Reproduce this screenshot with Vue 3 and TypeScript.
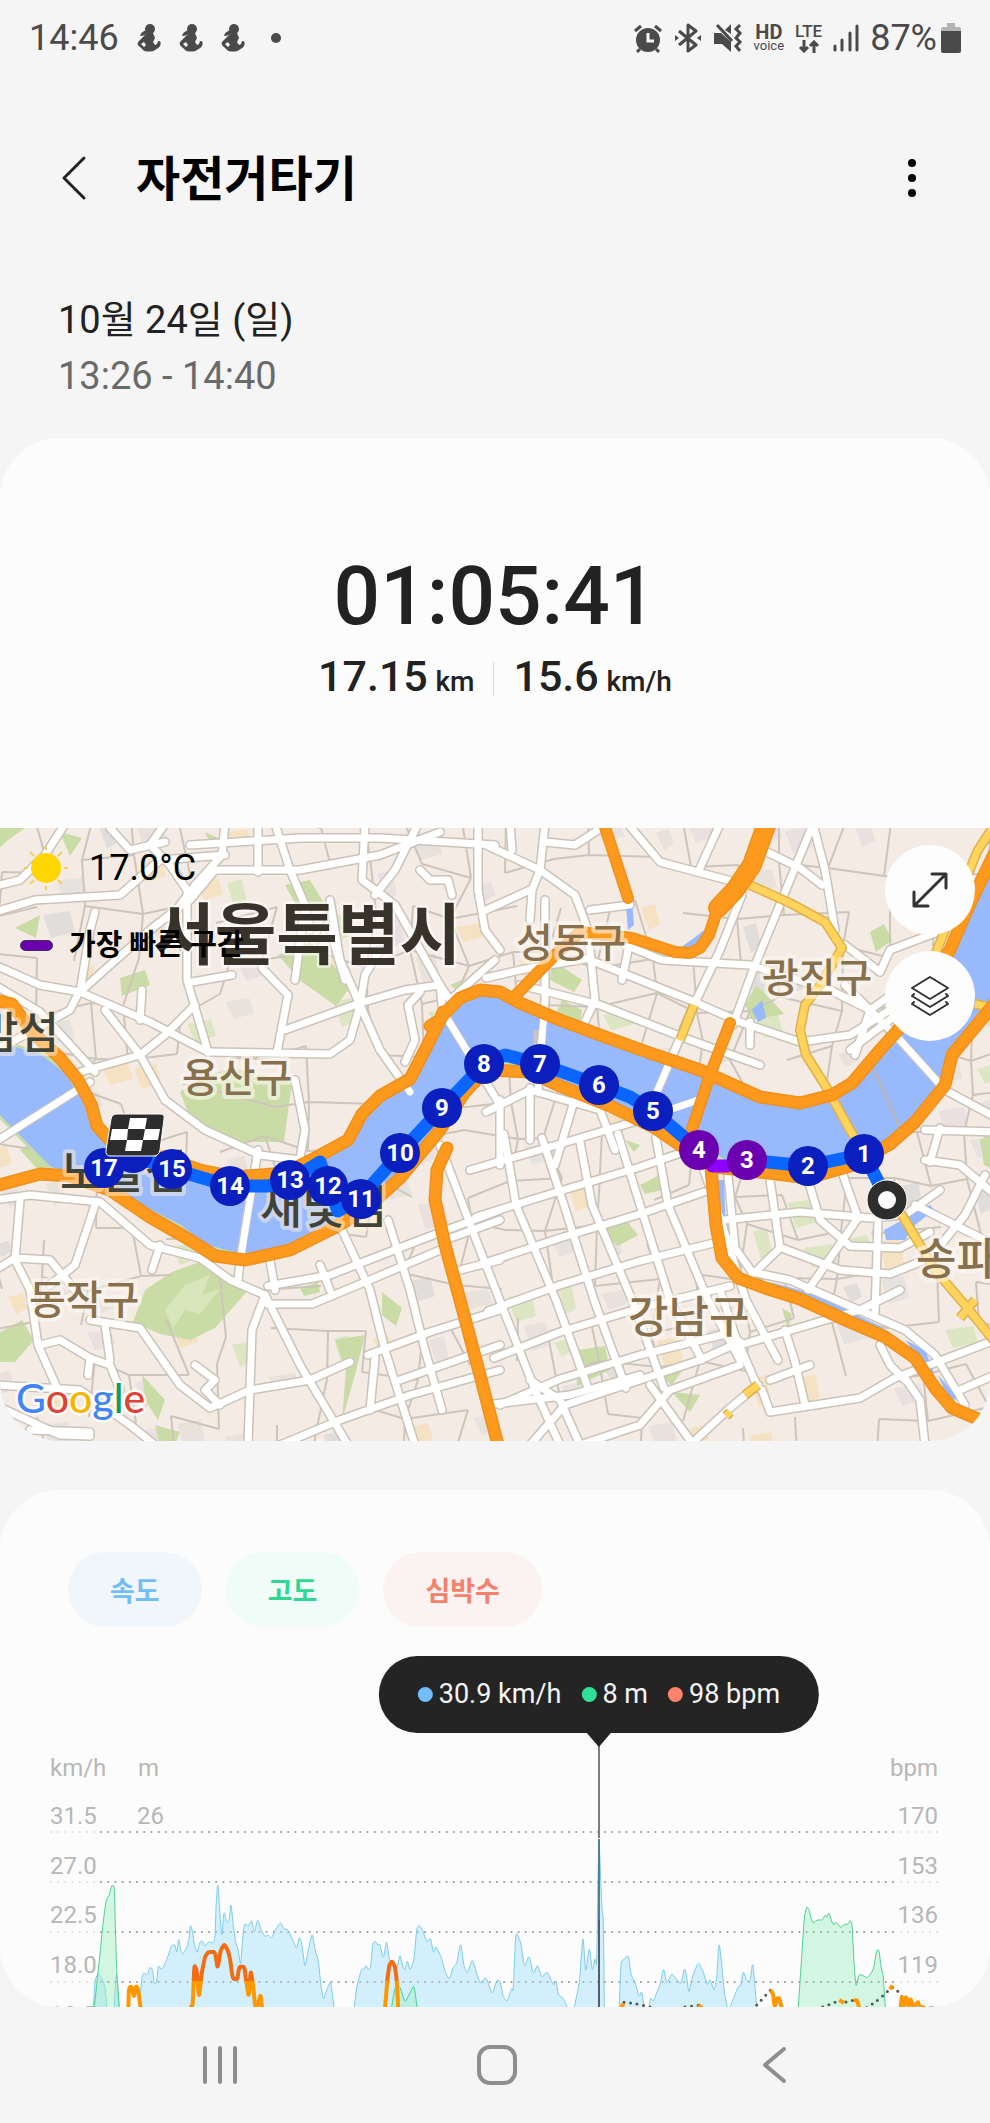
<script setup lang="ts">
type Point = [number, number]

interface Marker { n: number; x: number; y: number; fast?: boolean }
interface Label { text: string; x: number; y: number; size: number; kind: string }

const chips = [
  { text: '속도', kind: 'speed' },
  { text: '고도', kind: 'height' },
  { text: '심박수', kind: 'pulse' },
]

const readings = [
  { text: '30.9 km/h', kind: 'speed' },
  { text: '8 m', kind: 'height' },
  { text: '98 bpm', kind: 'pulse' },
]

/* ---------- map ---------- */

const markers: Marker[] = [
  { n: 16, x: 133, y: 1153 },
  { n: 17, x: 104, y: 1168 },
  { n: 15, x: 172, y: 1169 },
  { n: 14, x: 230, y: 1186 },
  { n: 13, x: 290, y: 1180 },
  { n: 12, x: 328, y: 1186 },
  { n: 11, x: 361, y: 1199 },
  { n: 10, x: 400, y: 1153 },
  { n: 9, x: 442, y: 1108 },
  { n: 8, x: 484, y: 1064 },
  { n: 7, x: 540, y: 1064 },
  { n: 6, x: 599, y: 1085 },
  { n: 5, x: 653, y: 1111 },
  { n: 3, x: 747, y: 1160, fast: true },
  { n: 4, x: 699, y: 1150, fast: true },
  { n: 2, x: 808, y: 1166 },
  { n: 1, x: 864, y: 1154 },
]

const labels: Label[] = [
  { text: '서울특별시', x: 153, y: 959, size: 67, kind: 'city' },
  { text: '성동구', x: 516, y: 957, size: 40, kind: 'district' },
  { text: '광진구', x: 762, y: 992, size: 40, kind: 'district' },
  { text: '용산구', x: 182, y: 1092, size: 40, kind: 'district' },
  { text: '동작구', x: 29, y: 1314, size: 40, kind: 'district' },
  { text: '강남구', x: 628, y: 1333, size: 44, kind: 'district' },
  { text: '송파구', x: 916, y: 1275, size: 44, kind: 'district' },
  { text: '밤섬', x: -22, y: 1049, size: 44, kind: 'island' },
  { text: '노들섬', x: 60, y: 1188, size: 46, kind: 'island' },
  { text: '새빛섬', x: 260, y: 1223, size: 46, kind: 'island' },
]

const streets: string[] = [
  '65,824 45,855 20,880 -5,886', '-5,912 35,900 120,895 160,860 225,855', '165,824 150,845 170,865 187,890 187,980 208,1052',
  '225,824 222,855 195,885 180,905', '190,845 300,838 380,838 495,845', '258,824 258,872', '190,900 215,870 300,870 380,855 440,832',
  '275,824 290,870 305,905 310,930', '365,824 362,880 395,905 440,985', '452,895 448,880 430,880 420,870', '478,824 478,890 485,930 500,950',
  '418,824 395,870 375,895', '192,982 232,975', '208,1052 330,1054 350,1040 360,1005 365,975 380,950', '262,968 288,995 277,1052',
  '330,900 340,960 360,1005 380,1050 410,1092', '440,1145 480,1250 535,1390 560,1445', '-5,965 40,985 80,992 150,1022 208,1052',
  '80,992 110,965 150,930 182,905', '95,912 90,930 80,992', '105,1010 140,1055 165,1100', '80,1072 140,1055 165,1035 195,1005',
  '-5,1142 90,1082', '-5,1050 25,1035 70,1010 80,990', '165,1100 205,1130 260,1155 300,1160', '295,1080 305,1130 300,1158', '-5,985 40,1012 95,1072',
  '285,1030 360,1003', '360,1003 405,990 440,985 450,1000 495,960', '440,985 442,1005', '445,1015 500,1105', '405,1062 415,1040 408,1005 420,992',
  '345,980 330,930', '305,905 295,980', '110,828 130,850 165,842', '142,990 140,1020',
  '258,1150 240,1262 238,1280', '-5,1200 30,1195 100,1202 150,1245 200,1258 230,1280 265,1295', '268,1286 330,1275 420,1240 500,1210',
  '20,1200 15,1260 30,1290 38,1345 58,1390', '-5,1270 15,1258 50,1260 75,1290', '95,1205 75,1265 50,1285', '90,1320 140,1328 180,1385 210,1408 250,1390 310,1380 350,1362',
  '265,1295 252,1330 248,1445', '265,1295 300,1365 348,1445', '268,1304 312,1304 370,1280 440,1250', '342,1230 370,1290 385,1350 415,1445',
  '388,1220 410,1290 425,1350 442,1410', '270,1260 275,1290', '368,1355 430,1332 500,1310', '375,1358 370,1410', '280,1445 340,1420 410,1395 500,1370',
  '400,1380 500,1345', '40,1345 60,1340 90,1358 110,1365 120,1390', '90,1358 88,1375', '-5,1385 80,1390 130,1425 155,1445', '-5,1405 60,1435 90,1436', '30,1430 90,1432',
  '160,1245 152,1270', '195,1365 215,1380 205,1390 220,1405', '320,1265 330,1290', '105,1325 110,1360', '460,1270 500,1260', '445,1240 500,1220',
  '486,845 540,870 575,895 588,930 595,1000 585,1022', '545,824 540,870 532,890 530,920', '486,910 530,890', '510,824 512,850', '545,842 575,845 598,830',
  '628,824 660,862 735,882', '720,824 700,868', '813,824 783,897 753,970 733,1025', '742,895 720,950 693,1007 657,1092', '813,824 825,870 835,930',
  '767,852 800,868 822,885', '590,960 690,1000 740,1022 800,1042 850,1035 890,1010', '520,985 600,1005 690,1040 760,1065', '486,978 520,970 590,958', '628,950 622,980',
  '625,945 662,960 750,965 830,990 870,1010', '845,945 880,972 890,950 935,933', '855,1055 870,1010 905,985', '850,1050 900,1012', '845,985 900,1040 945,1090 995,1117',
  '545,900 545,1000 538,1090', '750,1022 750,1045', '590,910 630,905', '486,1112 530,1090 600,1110 615,1150', '500,1100 500,1165', '575,1098 555,1165', '530,1088 530,1140',
  '925,1130 995,1132', '925,1160 960,1165 995,1195', '940,1128 930,1162', '724,1220 800,1212 870,1218 905,1215 940,1190', '770,1180 780,1248 752,1275', '808,1180 820,1220 850,1246 900,1248 930,1232',
  '843,1175 858,1218 808,1290', '782,1248 840,1270 890,1274 930,1258 965,1215 985,1175', '728,1175 735,1248 752,1272 790,1280 905,1330 935,1355 965,1405', '878,1222 875,1312', '915,1205 995,1245',
  '740,1345 860,1310 900,1290', '785,1330 795,1362 805,1405', '762,1390 770,1412 860,1398 895,1378 995,1340', '905,1378 920,1400 925,1445', '720,1290 735,1335 758,1388', '690,1445 730,1408 758,1385',
  '530,1445 565,1405 640,1380 700,1360 740,1342', '580,1445 640,1425 670,1390 740,1365', '880,1345 890,1365 905,1380', '960,1390 995,1375',
  '486,1405 570,1395 640,1375', '580,1445 560,1400 530,1380', '650,1385 690,1440', '770,1380 810,1365',
]

/* Regular street grid south of the river */
const grid: string[] = []
for (let i = 0; i < 6; i++) {
  const y = 1144 + i * 47
  grid.push(`${470 + i * 6},${y + 26} 560,${y} 640,${y - 24} ${i > 2 ? 730 : 704},${y - 46}`)
}
for (let i = 0; i < 6; i++) {
  const x = 504 + i * 38
  grid.push(`${x},${1134 + (i % 3) * 4} ${x + 12 + (i % 2) * 10},1205 ${x + 52},1300 ${x + 84},${i > 2 ? 1360 : 1388}`)
}

/* Fine lanes: a jittered mesh with a fixed seed */
let seed = 11
function rand(): number {
  seed = (seed * 16807) % 2147483647
  return seed / 2147483647
}
const COLS = 23
const ROWS = 15
const mesh: Point[][] = Array.from({ length: ROWS }, (_, r) =>
  Array.from({ length: COLS }, (_, c): Point => [
    Math.round(c * 47 - 10 + (rand() - 0.5) * 26),
    Math.round(820 + r * 46 + (rand() - 0.5) * 24),
  ]),
)
const lanes: string[] = []
const blocks: { d: string; fill: string }[] = []
const tints = ['#e9e1dc', '#f5e2c2', '#e0dddb', '#eae0e0', '#dde6c2', '#e6e2df']
for (let r = 0; r < ROWS - 1; r++) {
  for (let c = 0; c < COLS - 1; c++) {
    const [x, y] = mesh[r][c]
    if (rand() < 0.5) lanes.push(`M${x} ${y}L${mesh[r][c + 1].join(' ')}`)
    if (rand() < 0.5) lanes.push(`M${x} ${y}L${mesh[r + 1][c].join(' ')}`)
    if (rand() < 0.5) {
      const w = 12 + Math.round(rand() * 16)
      const h = 10 + Math.round(rand() * 16)
      blocks.push({
        d: `M${x + 6} ${y + 8}l${w} ${-4}l5 ${h}l${-w + 3} 6z`,
        fill: tints[Math.floor(rand() * tints.length)],
      })
    }
  }
}
const lanePath = lanes.join('')

const parks: string[] = [
  '180,1092 200,1078 232,1068 292,1082 284,1142 240,1142 192,1122', '278,955 310,942 352,985 336,1006 302,982', '285,885 310,880 325,905 300,912',
  '120,978 145,970 150,985 122,996', '15,928 40,915 36,938', '-5,828 25,828 8,840 -5,852', '60,832 82,838 70,856', '205,832 218,838 212,848',
  '133,1322 145,1290 172,1272 205,1260 250,1288 215,1328 190,1340 160,1334', '-5,1335 22,1320 34,1340 15,1362 -5,1362', '142,1375 165,1400 158,1420 145,1400',
  '155,1425 180,1432 175,1445 160,1445', '382,1292 402,1308 396,1326 382,1315', '335,1340 365,1335 355,1375 342,1420 346,1370', '594,1225 622,1215 638,1235 618,1246',
  '578,1350 605,1346 610,1370 577,1386', '552,960 582,980 574,992 550,980', '562,1000 582,1010 580,1022 556,1014', '870,932 884,924 892,940 876,952',
  '745,1005 756,985 768,996 784,1014 752,1020', '715,1082 780,1108 718,1098', '490,994 520,1002 512,1008 490,1004', '655,1372 690,1360 672,1385', '672,1392 700,1395 690,1412',
  '980,1140 995,1130 995,1170 984,1165', '300,1288 318,1282 320,1292 304,1296', '625,1140 640,1145 634,1152', '35,1140 60,1172 40,1172 20,1150', '782,1308 792,1314 788,1330',
  '640,1185 660,1175 662,1190 645,1194', '245,1250 300,1240 280,1250', '450,985 462,980 460,992',
]

const river =
  'M-5 1040L40 1052L66 1072L84 1100L92 1125L112 1142L160 1156L210 1176L275 1176L318 1158L352 1134L362 1112L385 1094L412 1076L428 1045L444 1012L470 992L500 992L560 1018L650 1052L720 1078L780 1102L830 1098L860 1076L895 1032L928 985L955 945L970 900L995 850V1005L956 1052L946 1084L905 1130L850 1164L800 1172L740 1168L704 1150L660 1124L610 1102L560 1082L520 1064L486 1064L462 1098L430 1140L396 1178L350 1220L300 1244L245 1256L205 1246L180 1226L140 1206L110 1188L50 1168L-5 1112Z'

const waters: string[] = [
  '626,905 632,900 634,925 628,930', '680,948 698,935 704,930 702,945 690,955', '752,1010 762,1000 766,1018 758,1022', '884,1230 930,1205 934,1210 915,1225 905,1240 886,1240',
  '718,1180 724,1180 726,1235 735,1265 726,1262', '770,1282 800,1290 830,1302 880,1326 900,1340 890,1344 820,1312', '905,1340 925,1350 935,1375 925,1365', '938,1375 958,1398 950,1402',
]

const highways: { pts: string; w: number }[] = [
  { pts: '-5,1000 12,1004 33,1033 60,1058 78,1080 91,1104 97,1126 112,1142 150,1152 200,1170 235,1177 285,1173 315,1158 348,1140 362,1114 380,1096 410,1079 425,1050 442,1016 460,998 480,990 500,992 520,1003 560,1020 600,1035 650,1053 700,1070 760,1097 800,1103 832,1095 852,1083 880,1050 898,1030 928,985 950,950 968,908 995,852', w: 12 },
  { pts: '-5,1186 40,1174 70,1176 110,1190 150,1217 190,1240 215,1256 245,1260 290,1250 330,1230 365,1210 400,1178 440,1130 465,1092 486,1070 530,1072 560,1086 610,1106 655,1128 690,1152 715,1167 760,1172 808,1178 850,1166 890,1144 915,1122 945,1085 952,1055 995,1003', w: 12 },
  { pts: '447,1148 437,1170 435,1200 445,1245 460,1300 480,1375 498,1445', w: 12 },
  { pts: '711,1168 716,1225 722,1258 738,1278 765,1288 800,1299 850,1322 885,1337 915,1358 935,1388 952,1408 980,1420', w: 12 },
  { pts: '730,1023 710,1075 690,1135', w: 11 },
  { pts: '604,824 628,898', w: 11 },
  { pts: '768,820 752,865 735,890 718,908 709,935 700,948 690,953 675,952 632,938 580,932 555,955 515,996', w: 11 },
  { pts: '768,820 752,865 735,890 718,908', w: 19 },
  { pts: '443,1012 440,1020 430,1026', w: 12 },
]

const arterials: string[] = [
  '750,885 790,903 825,922 842,948 820,985 805,1005 800,1030 806,1055 825,1085 850,1130 880,1180 905,1220 935,1270 965,1305 995,1342',
  '995,824 978,850 955,905 935,955', '694,1005 680,1040', '758,1385 745,1395', '730,1412 726,1416', '975,1004 995,1008', '960,1318 975,1300',
]

/* ---------- chart ---------- */

/* Samples are stored as triple-density coordinates: three units per drawn pixel */
const DENSITY = 3
const BASE = 801

function parse(raw: string, shift = 0): Point[] {
  return raw.split(' ').map((p): Point => {
    const [x, y] = p.split(',').map(Number)
    return [(x + shift) / DENSITY, y / DENSITY]
  })
}
function smooth(pts: Point[]): string {
  let d = `M${pts[0][0].toFixed(1)} ${pts[0][1].toFixed(1)}`
  for (let i = 1; i < pts.length - 1; i++) {
    const [x, y] = pts[i]
    const [px, py] = pts[i - 1]
    const [nx, ny] = pts[i + 1]
    d += `L${(x + (px - x) * 0.25).toFixed(1)} ${(y + (py - y) * 0.25).toFixed(1)}`
    d += `Q${x.toFixed(1)} ${y.toFixed(1)} ${(x + (nx - x) * 0.25).toFixed(1)} ${(y + (ny - y) * 0.25).toFixed(1)}`
  }
  const last = pts[pts.length - 1]
  return `${d}L${last[0].toFixed(1)} ${last[1].toFixed(1)}`
}

const R = 1470
const speed: string[] = [
  smooth(parse(`280,${BASE} 285,720 295,698 305,712 315,740 320,${BASE}`)),
  smooth(parse(`343,${BASE} 349,690 356,${BASE}`)),
  smooth(parse('418,801 425,715 430,698 442,705 450,680 458,690 463,735 470,725 475,675 485,690 500,660 515,615 525,615 531,640 536,592 545,645 560,625 567,600 571,553 578,575 583,615 592,640 600,605 607,602 615,620 625,605 640,610 645,590 648,500 653,425 660,520 665,595 672,512 680,548 687,545 693,487 700,560 708,610 715,630 722,680 730,570 735,550 745,560 755,540 763,580 773,536 783,570 795,590 805,585 815,595 825,570 842,546 850,565 865,570 878,600 890,628 898,590 905,610 915,684 925,630 937,578 945,630 955,660 962,730 970,782 980,750 992,722 1002,801')),
  smooth(parse('1063,801 1070,740 1085,685 1092,690 1098,675 1105,690 1112,680 1118,610 1125,603 1132,615 1140,612 1150,658 1160,600 1168,660 1180,672 1190,690 1200,642 1208,680 1215,690 1222,660 1230,692 1242,660 1250,565 1258,555 1268,570 1280,607 1292,593 1300,640 1308,618 1325,655 1335,695 1348,720 1360,680 1370,672 1382,605 1392,680 1402,702 1417,656 1430,700 1440,732 1458,710 1470,745 1478,762 1490,720 1500,722 1510,772 1522,785 1535,743 1540,755 1547,574 1562,605 1573,684 1587,645 1600,704 1613,673 1625,714 1642,693 1660,737 1668,720 1675,765 1690,775 1702,801')),
  smooth(parse('253,801 268,730 273,660 279,585 287,702 298,618 307,696 315,653 320,682 324,400 327,285 332,420 336,510 340,530 343,801', R)),
  smooth(parse('388,801 393,665 405,655 415,645 423,705 435,725 447,772 455,752 462,801', R)),
  smooth(parse('478,801 482,773 490,785 503,750 510,735 521,682 530,732 545,701 555,712 572,734 585,679 597,763 607,710 625,666 640,695 652,737 660,716 672,754 680,720 687,604 695,670 703,760 712,801', R)),
  smooth(parse('720,801 745,738 752,738 760,692 770,722 780,725 788,666 795,740 800,801', R)),
]
const height: string[] = [
  smooth(parse('283,801 300,640 308,560 318,480 328,465 335,435 343,440 346,560 350,690 358,801')),
  smooth(parse('1175,801 1183,750 1190,733 1200,740 1215,788 1228,762 1242,735 1251,801')),
  smooth(parse('925,801 935,650 943,530 950,500 957,508 963,535 970,550 980,540 998,540 1005,525 1010,532 1017,518 1028,554 1040,547 1052,564 1062,553 1075,552 1080,541 1086,548 1092,670 1098,742 1107,703 1120,707 1133,714 1150,690 1160,630 1167,630 1173,680 1180,710 1186,801', R)),
]
const pulse: string[] = [
  smooth(parse('385,806 387,742 395,740 402,772 408,738 414,745 422,806')),
  smooth(parse('568,801 578,800 583,676 590,690 597,775 605,700 615,650 625,636 645,636 653,686 662,630 673,613 683,630 690,655 698,716 712,718 718,680 733,680 738,720 746,772 752,690 760,740 765,800 772,800 782,762 786,806')),
  smooth(parse('1155,806 1162,720 1168,675 1176,664 1185,680 1190,720 1195,806')),
  smooth(parse('394,806 400,790', R)),
  smooth(parse('625,796 636,803', R)),
  smooth(parse('842,750 850,765 854,801 862,775 868,775 876,806', R)),
  smooth(parse('1048,780 1062,788', R)),
  smooth(parse('1092,781 1102,781 1108,806', R)),
  smooth(parse('1200,748 1208,736', R)),
  smooth(parse('1232,806 1235,768 1243,800 1248,768 1256,800 1262,775 1270,803 1284,785 1288,800 1305,803', R)),
]
const gaps: string[] = [
  smooth(parse('402,787 430,790 490,803', R)),
  smooth(parse('585,801 628,796', R)),
  smooth(parse('800,795 842,750', R)),
  smooth(parse('998,801 1045,783', R)),
  smooth(parse('1068,786 1100,778', R)),
  smooth(parse('1130,803 1165,780 1210,737 1240,775', R)),
]

const rows = [
  { y: 84, left: '31.5', mid: '26', right: '170' },
  { y: 134, left: '27.0', mid: '', right: '153' },
  { y: 183, left: '22.5', mid: '', right: '136' },
  { y: 233, left: '18.0', mid: '', right: '119' },
  { y: 283, left: '13.5', mid: '', right: '102' },
]
const rules = [92, 142, 192, 242]
</script>

<template>
  <div class="page">
    <div class="status">
      <div class="status-side">
        <span>14:46</span>
        <svg v-for="i in 3" :key="i" class="figure" viewBox="0 0 24 28" width="24" height="28">
          <circle cx="13" cy="5" r="5" />
          <path d="M10 6C7 7 4 8 3 12c3 0 6-1 8-4z" />
          <path d="M10 9h6l2 5-2 4 2 3 2-1c1-1 0-3 2-3 2 0 2 3 1 5-2 3-4 3-5 4-2 2-10 2-12 0-1-2-4-3-5-5-1-2 0-3 1-4zM7 18l-3 2 3 3 2-2z" fill-rule="evenodd" />
        </svg>
        <span class="bullet"></span>
      </div>
      <div class="status-side right">
        <svg viewBox="0 0 30 30" width="30" height="30">
          <circle cx="15" cy="17" r="12" fill="#4a4a4a" />
          <path d="M2 8l6-5M28 8l-6-5M7 26l-3 3M23 26l3 3" stroke="#4a4a4a" stroke-width="3" fill="none" />
          <path d="M15 10v8h6" stroke="#f5f5f5" stroke-width="3" fill="none" />
        </svg>
        <svg viewBox="0 0 28 30" width="28" height="30" fill="none" stroke="#4a4a4a" stroke-width="3" stroke-linejoin="round">
          <path d="M5 8l17 14-8 6V2l8 6L5 22" />
          <path d="M1 12l4 3-4 3zM27 12l-4 3 4 3z" fill="#4a4a4a" stroke="none" />
        </svg>
        <svg viewBox="0 0 30 30" width="30" height="30">
          <path d="M1 10h7l10 9v10l-9-8H1zM12 7l6-6v10z" fill="#4a4a4a" />
          <path d="M4 2l15 16" stroke="#4a4a4a" stroke-width="3" />
          <path d="M27 2l-4 4 4 4-4 5 4 4-4 4 4 5" stroke="#4a4a4a" stroke-width="3" fill="none" />
        </svg>
        <span class="stack hd"><b>HD</b><small>voice</small></span>
        <span class="stack lte"><b>LTE</b>
          <svg viewBox="0 0 22 13" width="22" height="13" fill="none" stroke="#4a4a4a" stroke-width="3">
            <path d="M6 0v11M2 7l4 4 4-4M16 13V2M12 6l4-4 4 4" />
          </svg>
        </span>
        <svg viewBox="0 0 26 28" width="26" height="28" stroke="#4a4a4a" stroke-width="3" stroke-linecap="round">
          <path d="M2 22v4M9 16v10M17 9v17M24 2v24" />
        </svg>
        <span class="battery"><span>87%</span>
          <svg viewBox="0 0 20 30" width="20" height="30">
            <path d="M6 0h8v4h4q2 0 2 2v3H0V6q0-2 2-2h4z" fill="#b4b4b4" />
            <path d="M0 8h20v20q0 2-2 2H2q-2 0-2-2z" fill="#4a4a4a" />
          </svg>
        </span>
      </div>
    </div>

    <header class="title-bar">
      <button class="plain" aria-label="뒤로">
        <svg viewBox="0 0 48 48" width="48" height="48" fill="none" stroke="#222" stroke-width="3" stroke-linecap="round" stroke-linejoin="round">
          <path d="M34 4L14 24l20 20" />
        </svg>
      </button>
      <h1>자전거타기</h1>
      <button class="plain" aria-label="더보기">
        <svg viewBox="0 0 48 48" width="48" height="48">
          <circle cx="24" cy="9" r="4" /><circle cx="24" cy="24" r="4" /><circle cx="24" cy="39" r="4" />
        </svg>
      </button>
    </header>

    <section class="when">
      <p>10월 24일 (일)</p>
      <p class="time">13:26 - 14:40</p>
    </section>

    <section class="card">
      <div class="summary">
        <div class="duration">01:05:41</div>
        <div class="totals">
          <span>17.15 <small>km</small></span>
          <i></i>
          <span>15.6 <small>km/h</small></span>
        </div>
      </div>

      <div class="map">
        <svg class="map-art" viewBox="0 828 990 613" preserveAspectRatio="xMidYMid slice">
          <rect x="0" y="828" width="990" height="613" fill="#f4ebe5" />
          <path v-for="(b, i) in blocks" :key="'b' + i" :d="b.d" :fill="b.fill" />
          <polygon v-for="(p, i) in parks" :key="'p' + i" :points="p" fill="#c9dca6" />
          <path d="M165 1310l20-25 25-10-8 20 18-6-20 25-15-4-12 18z" fill="#d8e6bb" />
          <path :d="lanePath" stroke="#cdc5bb" stroke-width="2" fill="none" />
          <g fill="none" stroke="#cbc3b8" stroke-width="10" stroke-linejoin="round" stroke-linecap="round">
            <polyline v-for="(s, i) in streets" :key="i" :points="s" />
            <polyline v-for="(s, i) in grid" :key="'g' + i" :points="s" />
          </g>
          <path :d="river" fill="#98b9fb" stroke="#c5dba9" stroke-width="3" />
          <polygon v-for="(p, i) in waters" :key="'w' + i" :points="p" fill="#98b9fb" />
          <g fill="none" stroke="#c8c5c4" stroke-width="9">
            <path d="M-5 1142L90 1082M258 1150L240 1258M445 1015L500 1105M538 1090V1030M657 1092L680 1040M895 1035L945 1090" />
          </g>
          <path d="M872 1066L902 1132" stroke="#b4b6ba" stroke-width="3" />
          <g fill="none" stroke="#fff" stroke-width="7" stroke-linejoin="round" stroke-linecap="round">
            <polyline v-for="(s, i) in streets" :key="i" :points="s" />
            <polyline v-for="(s, i) in grid" :key="'g' + i" :points="s" />
          </g>
          <g fill="none" stroke-linejoin="round">
            <polyline v-for="(s, i) in arterials" :key="'c' + i" :points="s" stroke="#e0b04c" stroke-width="10" />
            <polyline v-for="(s, i) in arterials" :key="'a' + i" :points="s" stroke="#ffd35c" stroke-width="7" />
          </g>
          <g fill="none" stroke-linejoin="round" stroke-linecap="round">
            <polyline v-for="(h, i) in highways" :key="'k' + i" :points="h.pts" stroke="#ef901c" :stroke-width="h.w + 1" />
            <polyline v-for="(h, i) in highways" :key="'h' + i" :points="h.pts" stroke="#fd991c" :stroke-width="h.w - 2" />
          </g>
          <text v-for="l in labels" :key="l.text" :class="l.kind" :x="l.x" :y="l.y" :font-size="l.size">{{ l.text }}</text>

          <g fill="none" stroke="#0a66ff" stroke-width="13" stroke-linejoin="round">
            <path d="M887 1200L864 1154L808 1166L747 1160M699 1150L653 1111L630 1097L599 1085L540 1064L505 1055L484 1064L442 1108L400 1153L361 1197L338 1211L320 1162L290 1180L268 1186L230 1186L172 1169L133 1156L104 1168" />
            <path d="M747 1160L727 1166H712L699 1150" stroke="#8f00ff" />
          </g>
          <g v-for="m in markers" :key="m.n">
            <circle :cx="m.x" :cy="m.y" r="20" :fill="m.fast ? '#6a00b0' : '#0a1fbe'" />
            <text v-if="m.n !== 16" class="km" :x="m.x" :y="m.y + 8">{{ m.n }}</text>
          </g>
          <circle cx="887" cy="1200" r="20" fill="#2d2d2d" stroke="#fff" stroke-width="1" />
          <circle cx="887" cy="1200" r="9" fill="#fff" />
          <path d="M117 1114H160Q165 1114 164 1119L160 1150Q159 1156 153 1156H111Q105 1156 106 1150L111 1119Q112 1114 117 1114Z" fill="#2d2d2d" stroke="#fff" stroke-width="1" />
          <path d="M130 1118H147L145 1129H160L158 1140H143L141 1151H125L127 1140H110L112 1129H128ZM128 1129L127 1140H143L145 1129Z" fill="#fff" fill-rule="evenodd" />
          <text class="logo" x="16" y="1413"><tspan fill="#4285f4">G</tspan><tspan fill="#db4437">o</tspan><tspan fill="#f4b400">o</tspan><tspan fill="#4285f4">g</tspan><tspan fill="#0f9d58">l</tspan><tspan fill="#db4437">e</tspan></text>
        </svg>

        <div class="map-info">
          <div class="weather">
            <svg viewBox="0 0 46 46" width="46" height="46">
              <path d="M23 1v4M23 41v4M1 23h4M41 23h4M7 7l4 4M35 35l4 4M7 39l4-4M35 11l4-4" stroke="#f3cf62" stroke-width="2" />
              <circle cx="23" cy="23" r="15" fill="#ffd600" />
            </svg>
            <span>17.0°C</span>
          </div>
          <div class="legend"><i></i><span>가장 빠른 구간</span></div>
        </div>

        <div class="map-tools">
          <button aria-label="지도 확대">
            <svg viewBox="0 0 40 40" width="40" height="40" fill="none" stroke="#333" stroke-width="3" stroke-linecap="round" stroke-linejoin="round">
              <path d="M4 36L36 4M22 4h14v14M4 22v14h14" />
            </svg>
          </button>
          <button aria-label="지도 유형">
            <svg viewBox="0 0 40 40" width="40" height="40" fill="none" stroke="#333" stroke-width="2" stroke-linecap="round" stroke-linejoin="round">
              <path d="M20 1l18 11-18 11L2 12z" />
              <path d="M4 18l-2 2 18 11 18-11-2-2M4 26l-2 2 18 11 18-11-2-2" />
            </svg>
          </button>
        </div>
      </div>
    </section>

    <section class="card chart-card">
      <div class="chips">
        <button v-for="c in chips" :key="c.kind" :class="['chip', c.kind]">{{ c.text }}</button>
      </div>
      <div class="chart">
        <div class="tooltip">
          <span v-for="r in readings" :key="r.kind"><i :class="r.kind"></i>{{ r.text }}</span>
        </div>
        <svg class="plot" viewBox="0 0 990 267">
          <defs>
            <linearGradient id="zone" gradientUnits="userSpaceOnUse" x1="0" y1="0" x2="0" y2="267">
              <stop offset="0.904" stop-color="#f26c12" />
              <stop offset="0.904" stop-color="#ff9800" />
            </linearGradient>
          </defs>
          <g class="axis">
            <text x="50" y="36">km/h</text>
            <text x="138" y="36">m</text>
            <text x="938" y="36" text-anchor="end">bpm</text>
          </g>
          <g stroke-width="2" stroke-linecap="round" stroke-dasharray="0 7.2">
            <g v-for="y in rules" :key="y">
              <path :d="`M51 ${y}H98M901 ${y}H940`" stroke="#ddd" />
              <path :d="`M101 ${y}H898`" stroke="#a8a8a8" />
            </g>
          </g>
          <path v-for="(d, i) in speed" :key="'s' + i" :d="d" fill="#bce8fb" fill-opacity="0.65" stroke="#7fcdec" stroke-width="1" />
          <path v-for="(d, i) in height" :key="'e' + i" :d="d" fill="#a0f0c4" fill-opacity="0.45" stroke="#4fd092" stroke-width="1" />
          <g stroke="#9a9a9a" stroke-opacity="0.5" stroke-width="2" stroke-linecap="round" stroke-dasharray="0 7.2">
            <path v-for="y in rules" :key="y" :d="`M101 ${y}H898`" />
          </g>
          <path v-for="(d, i) in gaps" :key="'n' + i" :d="d" fill="none" stroke="#555" stroke-width="3" stroke-linecap="round" stroke-dasharray="0 6.6" />
          <path v-for="(d, i) in pulse" :key="'h' + i" :d="d" fill="none" stroke="url(#zone)" stroke-width="4" stroke-linejoin="round" />
          <path d="M599 -10V98" stroke="#7d7d7d" stroke-width="2" />
          <path d="M599 99V267" stroke="#4f7f94" stroke-width="2" />
          <path d="M599 180V267" stroke="#50606a" stroke-width="2" />
          <g v-for="r in rows" :key="r.y" class="axis">
            <text x="50" :y="r.y">{{ r.left }}</text>
            <text v-if="r.mid" x="137" :y="r.y">{{ r.mid }}</text>
            <text x="938" :y="r.y" text-anchor="end">{{ r.right }}</text>
          </g>
        </svg>
      </div>
    </section>

    <nav class="nav">
      <button class="plain" aria-label="최근 앱">
        <svg viewBox="0 0 48 48" width="48" height="48" stroke="#8e8e8e" stroke-width="4" stroke-linecap="round"><path d="M9 7v34M24 7v34M39 7v34" /></svg>
      </button>
      <button class="plain" aria-label="홈">
        <svg viewBox="0 0 48 48" width="48" height="48" fill="none" stroke="#8e8e8e" stroke-width="4"><rect x="6" y="6" width="36" height="36" rx="11" /></svg>
      </button>
      <button class="plain" aria-label="이전">
        <svg viewBox="0 0 48 48" width="48" height="48" fill="none" stroke="#8e8e8e" stroke-width="4" stroke-linecap="round" stroke-linejoin="round"><path d="M34 8L15 24l19 16" /></svg>
      </button>
    </nav>
  </div>
</template>

<style>
body {
  margin: 0;
  background: #f5f5f5;
}
</style>

<style scoped>
.page {
  min-height: 100vh;
  display: flex;
  flex-direction: column;
  background: #f5f5f5;
  color: #222;
  font-family: Roboto, 'Noto Sans CJK KR', sans-serif;
}
svg {
  display: block;
  flex: none;
}
button {
  font-family: inherit;
  border: 0;
  padding: 0;
  margin: 0;
  cursor: pointer;
}
.plain {
  background: none;
  display: flex;
}
.status {
  display: flex;
  justify-content: space-between;
  align-items: center;
  height: 76px;
  padding: 0 29px;
  font-size: 36px;
  line-height: 44px;
  color: #4a4a4a;
}
.status-side {
  display: flex;
  align-items: center;
  gap: 18px;
}
.status-side.right {
  gap: 11px;
}
.figure {
  fill: #4a4a4a;
}
.bullet {
  width: 10px;
  height: 10px;
  margin-left: 8px;
  border-radius: 50%;
  background: #4a4a4a;
}
.stack {
  display: flex;
  flex-direction: column;
  align-items: center;
  line-height: 15px;
}
.stack b {
  font-size: 20px;
}
.stack small {
  font-size: 13px;
  line-height: 12px;
}
.stack.lte {
  gap: 2px;
}
.stack.lte b {
  font-size: 17px;
  font-weight: 500;
  line-height: 14px;
}
.battery {
  display: flex;
  align-items: center;
  gap: 4px;
}
.title-bar {
  display: flex;
  align-items: center;
  gap: 38px;
  height: 204px;
  padding: 0 54px 0 50px;
}
h1 {
  flex: 1;
  margin: 0;
  padding-top: 4px;
  font-size: 48px;
  line-height: 64px;
  font-weight: 700;
  color: #000;
}
.when {
  padding: 12px 58px 34px;
  font-size: 38px;
  line-height: 56px;
}
.when p {
  margin: 0;
}
.when .time {
  color: #6a6a6a;
}
.card {
  background: #fcfcfc;
  border-radius: 60px;
  overflow: hidden;
}
.summary {
  display: flex;
  flex-direction: column;
  align-items: center;
  padding: 109px 24px 115px;
  font-weight: 500;
}
.duration {
  font-size: 82px;
  line-height: 98px;
}
.totals {
  display: flex;
  align-items: center;
  gap: 19px;
  font-size: 43px;
  line-height: 62px;
}
.totals small {
  font-size: 28px;
  margin-left: -3px;
}
.totals i {
  width: 1px;
  height: 34px;
  background: #ddd;
}
.map {
  position: relative;
}
.map-art {
  width: 100%;
  height: auto;
}
.map-art text {
  font-family: 'Noto Sans CJK KR', sans-serif;
  font-weight: 700;
  paint-order: stroke;
  stroke-linejoin: round;
}
.city {
  fill: #37322a;
  stroke: rgba(255, 255, 255, 0.6);
  stroke-width: 5px;
}
.map-art .district {
  font-weight: 500;
  fill: #86704d;
  stroke: rgba(255, 250, 244, 0.6);
  stroke-width: 8px;
}
.map-art .island {
  font-weight: 500;
  fill: #40433a;
  stroke: rgba(255, 240, 220, 0.5);
  stroke-width: 8px;
}
.map-art .km {
  font-family: Roboto, sans-serif;
  font-size: 24px;
  font-weight: 700;
  fill: #fff;
  text-anchor: middle;
}
.map-art .logo {
  font-family: Lato, sans-serif;
  font-size: 41px;
  font-weight: 500;
  stroke: rgba(255, 255, 255, 0.8);
  stroke-width: 5px;
}
.map-info {
  position: absolute;
  top: 17px;
  left: 20px;
  color: #000;
}
.weather {
  display: flex;
  align-items: center;
  gap: 20px;
  padding-left: 3px;
  height: 46px;
  font-size: 36px;
  line-height: 44px;
}
.legend {
  display: flex;
  align-items: center;
  gap: 16px;
  margin-top: 34px;
  font-size: 29px;
  line-height: 40px;
  font-weight: 700;
}
.legend i {
  box-sizing: border-box;
  width: 33px;
  height: 11px;
  border: 1px solid #3f3050;
  border-radius: 6px;
  background: #6a00b0;
}
.map-tools {
  position: absolute;
  top: 17px;
  right: 15px;
  display: flex;
  flex-direction: column;
  gap: 16px;
}
.map-tools button {
  display: flex;
  align-items: center;
  justify-content: center;
  width: 90px;
  height: 90px;
  border-radius: 50%;
  background: #fdfdfd;
}
.chart-card {
  margin-top: 49px;
}
.chips {
  display: flex;
  gap: 24px;
  padding: 62px 68px 0;
}
.chip {
  height: 75px;
  padding: 0 42px;
  border-radius: 38px;
  font-size: 27px;
  font-weight: 700;
}
.chip.speed {
  background: #f1f6fb;
  color: #74bdf5;
}
.chip.height {
  background: #effcf7;
  color: #2fd892;
}
.chip.pulse {
  background: #fbf2f2;
  color: #f5816c;
}
.chart {
  position: relative;
  padding-top: 113px;
}
.plot {
  width: 100%;
  height: auto;
  overflow: visible;
}
.axis text {
  font-size: 24px;
  fill: #b7b7b7;
}
.tooltip {
  position: absolute;
  top: 29px;
  left: 60.5%;
  transform: translateX(-50%);
  display: flex;
  justify-content: center;
  gap: 20px;
  padding: 0 39px;
  border-radius: 39px;
  background: #242424;
  color: #f4f4f4;
  font-size: 27px;
  line-height: 77px;
  white-space: nowrap;
}
.tooltip::after {
  content: '';
  position: absolute;
  top: 100%;
  left: 50%;
  margin-left: -12px;
  border: 12px solid transparent;
  border-top: 14px solid #242424;
  border-bottom: 0;
}
.tooltip span {
  display: flex;
  align-items: center;
  gap: 6px;
}
.tooltip i {
  width: 15px;
  height: 15px;
  border-radius: 50%;
}
.tooltip .speed {
  background: #72bdfb;
}
.tooltip .height {
  background: #30e098;
}
.tooltip .pulse {
  background: #fd826b;
}
.nav {
  display: flex;
  justify-content: center;
  gap: 229px;
  padding: 34px 0 34px 3px;
}
</style>
